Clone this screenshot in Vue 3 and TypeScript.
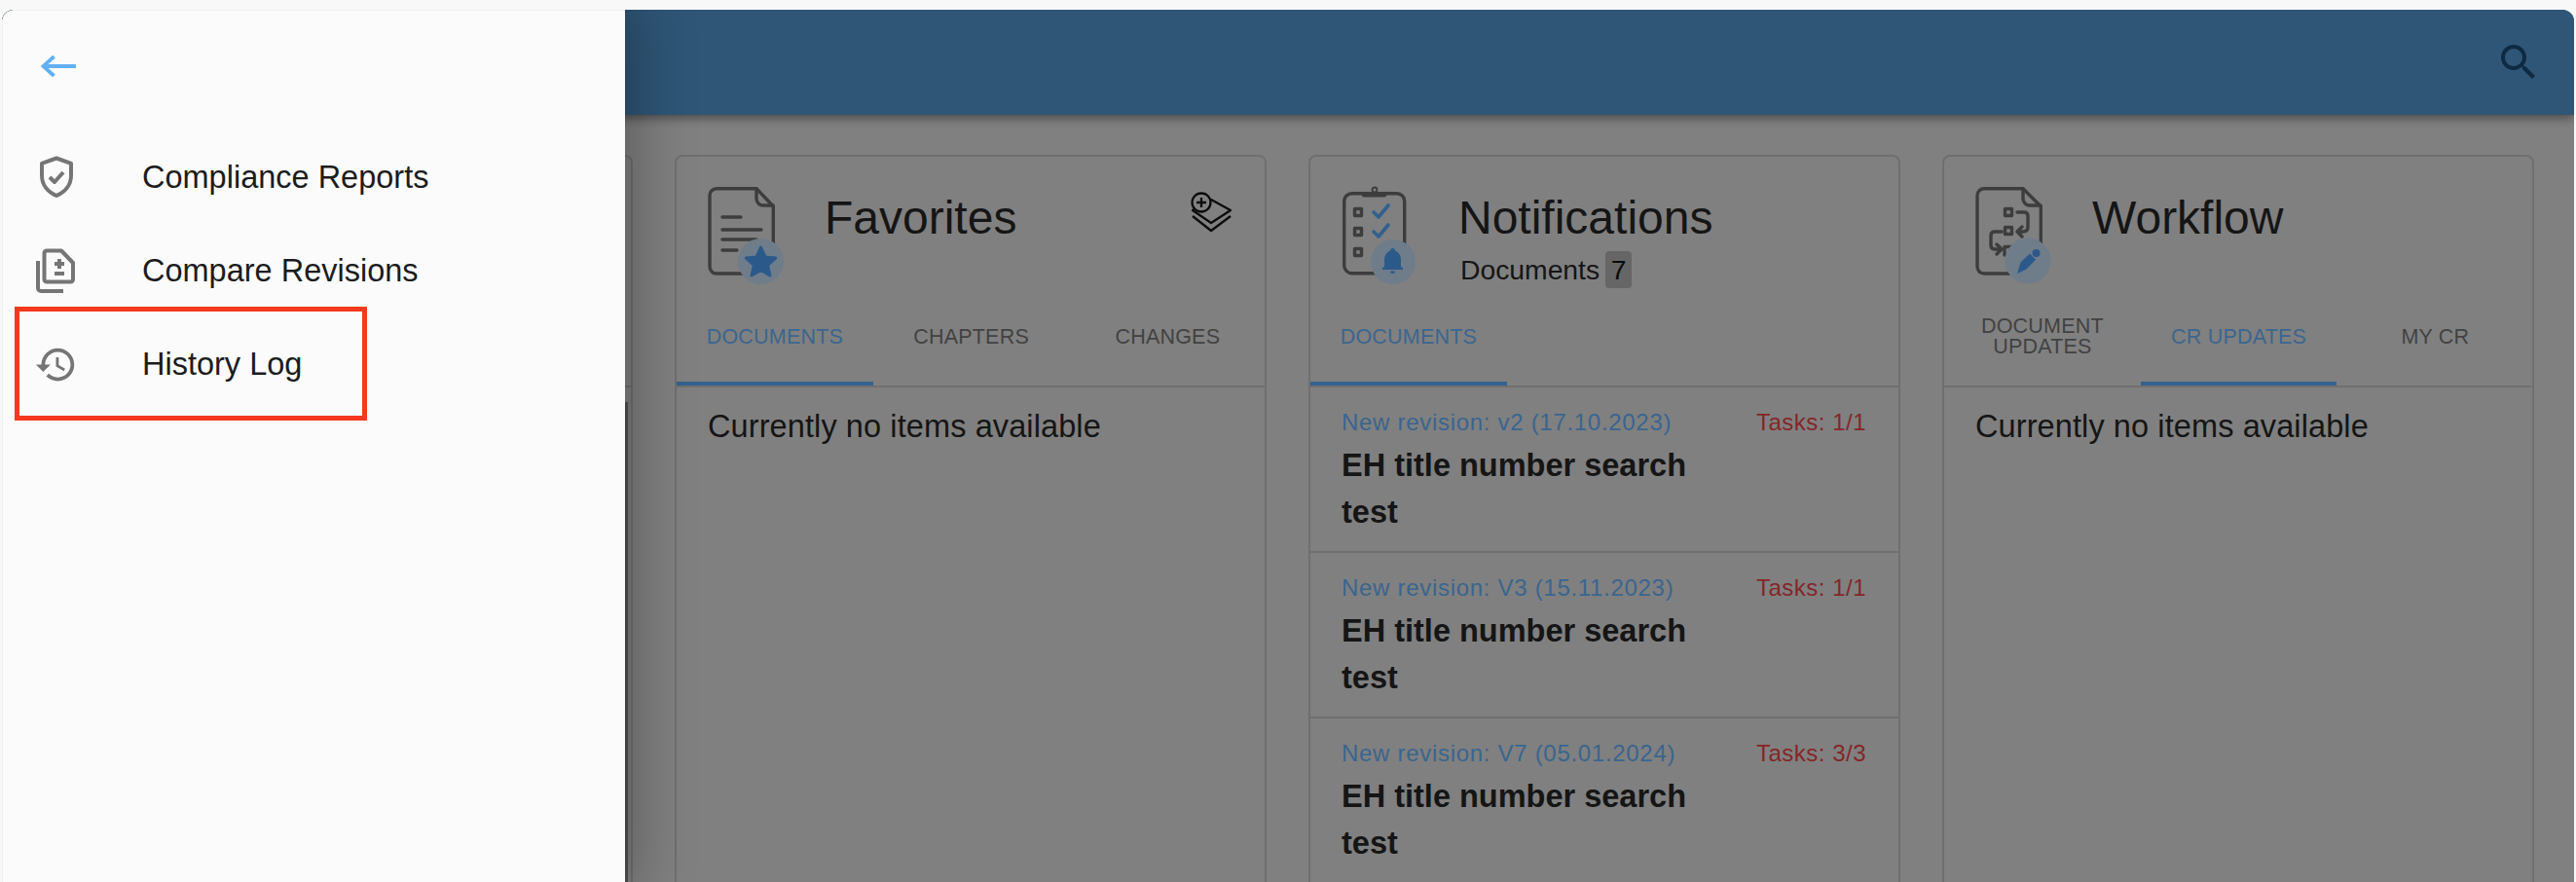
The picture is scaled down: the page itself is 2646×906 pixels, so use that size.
<script setup lang="ts">
const navItems = ['Compliance Reports', 'Compare Revisions', 'History Log']

const favoriteTabs = ['Documents', 'Chapters', 'Changes']
const workflowTabs = ['Document Updates', 'CR Updates', 'My CR']

const notifications = [
  { revision: 'New revision: v2 (17.10.2023)', tasks: 'Tasks: 1/1' },
  { revision: 'New revision: V3 (15.11.2023)', tasks: 'Tasks: 1/1' },
  { revision: 'New revision: V7 (05.01.2024)', tasks: 'Tasks: 3/3' },
]
</script>

<template>
  <div class="page">
    <div class="window">
      <header class="topbar">
        <svg class="search" viewBox="0 0 24 24">
          <path d="M15.5 14h-.79l-.28-.27C15.41 12.59 16 11.11 16 9.5 16 5.91 13.09 3 9.5 3S3 5.91 3 9.5 5.91 16 9.5 16c1.61 0 3.09-.59 4.23-1.57l.27.28v.79l5 4.99L20.49 19l-4.99-5zm-6 0C7.01 14 5 11.99 5 9.5S7.01 5 9.5 5 14 7.01 14 9.5 11.99 14 9.5 14z" />
        </svg>
      </header>

      <main class="board">
        <!-- first card sits behind the open drawer -->
        <section class="card">
          <div class="card-head"></div>
          <div class="tabs"></div>
          <div class="hidden-item"></div>
        </section>

        <section class="card">
          <div class="card-head">
            <svg class="card-icon" viewBox="0 0 84 104">
              <g class="line">
                <path d="M9 3.7H50L67.3 22V84a7 7 0 0 1-7 7H9a7 7 0 0 1-7-7V10.700a7 7 0 0 1 7-7z" />
                <path d="M50 3.700V14a7 7 0 0 0 7 7H67" />
                <path d="M15 33H34M15 46H55M15 56H50M15 67H30" />
              </g>
              <circle class="badge" cx="54.500" cy="78.500" r="23.500" />
              <polygon class="accent-fill" points="54.500,64 58.900,73.900 69.700,75.100 61.600,82.300 63.900,92.900 54.500,87.500 45.100,92.900 47.400,82.300 39.300,75.100 50.100,73.900" />
            </svg>
            <div class="titles">
              <h2>Favorites</h2>
            </div>
            <svg class="add-icon" viewBox="0 0 44 44">
              <path d="M2 26L21 41L41 26" />
              <path d="M21 9L41 20L21 33L2 20z" />
              <circle cx="11" cy="12" r="9.500" />
              <path d="M11 7V17M6 12H16" />
            </svg>
          </div>
          <div class="tabs">
            <div v-for="(tab, i) in favoriteTabs" :key="tab" class="tab" :class="{ active: i === 0 }">{{ tab }}</div>
          </div>
          <p class="empty">Currently no items available</p>
        </section>

        <section class="card">
          <div class="card-head">
            <svg class="card-icon" viewBox="0 0 84 104">
              <g class="line">
                <rect x="2.700" y="8.700" width="62" height="82" rx="8" />
                <circle cx="34" cy="5" r="2.500" stroke-width="1.800" />
                <rect x="13.500" y="24.500" width="7" height="7" />
                <rect x="13.500" y="44.500" width="7" height="7" />
                <rect x="13.500" y="65.500" width="7" height="7" />
              </g>
              <path class="dark-fill" d="M19 7H48L46 11a2 2 0 0 1-2 1.500H23a2 2 0 0 1-2-1.500z" />
              <path class="accent-line" d="M33 28L38 33L48 21M33 48L38 53L48 41" />
              <circle class="badge" cx="53" cy="79" r="23" />
              <path class="accent-fill no-stroke" d="M44 84.500V77c0-5 3-8.500 6-9.500a2.500 2.500 0 0 1 5 0c3 1 6 4.500 6 9.500v7.500zM42 84.500H63V87H42zM50 88.500H55A2.500 2.500 0 0 1 50 88.500z" />
            </svg>
            <div class="titles">
              <h2>Notifications</h2>
              <div class="count-row">
                <span>Documents</span>
                <span class="count">7</span>
              </div>
            </div>
          </div>
          <div class="tabs">
            <div class="tab active">Documents</div>
          </div>
          <div v-for="item in notifications" :key="item.revision" class="notification">
            <div class="notification-top">
              <span class="revision">{{ item.revision }}</span>
              <span class="tasks">{{ item.tasks }}</span>
            </div>
            <div class="doc-title">EH title number search test</div>
          </div>
        </section>

        <section class="card">
          <div class="card-head">
            <svg class="card-icon" viewBox="0 0 84 104">
              <g class="line">
                <path d="M9 3.7H49L67.3 22V84a7 7 0 0 1-7 7H9a7 7 0 0 1-7-7V10.700a7 7 0 0 1 7-7z" />
                <path d="M49 3.700V14a7 7 0 0 0 7 7H67" />
                <rect x="30.500" y="24.500" width="7" height="7" />
                <rect x="30.500" y="43.500" width="7" height="7" />
                <path d="M30 72V63.500H38" />
                <path d="M43 28H50Q54 28 54 32V43Q54 48 49 48H43M48 43L43 48L48 53" />
                <path d="M27 48H20Q16 48 16 52V62Q16 66 20 66H27M22 61L27 66L22 71" />
              </g>
              <circle class="badge" cx="54" cy="78" r="23.500" />
              <path class="accent-fill no-stroke" d="M43 91L46.500 79.500L56 70.500L62 76.800L52.500 86.500z" />
              <circle class="accent-fill no-stroke" cx="62.500" cy="70" r="4" />
            </svg>
            <div class="titles">
              <h2>Workflow</h2>
            </div>
          </div>
          <div class="tabs">
            <div v-for="(tab, i) in workflowTabs" :key="tab" class="tab" :class="{ active: i === 1 }">{{ tab }}</div>
          </div>
          <p class="empty">Currently no items available</p>
        </section>
      </main>

      <aside class="drawer">
        <div class="drawer-head">
          <svg class="back" viewBox="0 0 36 22">
            <path d="M36 11H3M13.500 1L2.500 11L13.500 21" />
          </svg>
        </div>
        <nav>
          <div v-for="(label, i) in navItems" :key="label" class="nav-item">
            <span class="nav-icon">
              <svg v-if="i === 0" class="stroke-icon" viewBox="0 0 45 46">
                <path d="M23 3.500L38 8.800V21.500C38 31.500 31 38.500 23 42C15 38.500 8 31.500 8 21.500V8.800z" />
                <path d="M16 23L21 28L30 18" />
              </svg>
              <svg v-else-if="i === 1" class="stroke-icon" viewBox="0 0 45 46">
                <path d="M13 2.500H28L40 15V32a2.500 2.500 0 0 1-2.500 2.500H13a2.500 2.500 0 0 1-2.500-2.500V5a2.500 2.500 0 0 1 2.500-2.500z" />
                <path d="M4 13V41a3 3 0 0 0 3 3H30" />
                <path d="M26 11V21M21 16H31M21 26H31" />
              </svg>
              <svg v-else class="fill-icon" viewBox="0 0 24 24">
                <path d="M13 3c-4.970 0-9 4.030-9 9H1l3.890 3.890.07.140L9 12H6c0-3.870 3.130-7 7-7s7 3.130 7 7-3.130 7-7 7c-1.930 0-3.680-.79-4.940-2.060l-1.420 1.420C8.270 19.990 10.510 21 13 21c4.970 0 9-4.030 9-9s-4.030-9-9-9zm-1 5v5l4.280 2.540.72-1.210-3.500-2.080V8H12z" />
              </svg>
            </span>
            <span class="nav-label">{{ label }}</span>
            <div v-if="i === 2" class="highlight"></div>
          </div>
        </nav>
      </aside>
    </div>
  </div>
</template>

<style>
html,
body {
  margin: 0;
  background: #f8f8f8;
}
</style>

<style scoped>
.page {
  width: 2646px;
  height: 906px;
  box-sizing: border-box;
  padding: 10px 2px 0;
  overflow: hidden;
  font-family: "Liberation Sans", Arial, sans-serif;
  color: #151515;
}

.window {
  position: relative;
  height: 896px;
  display: flex;
  flex-direction: column;
  overflow: hidden;
  border-radius: 12px 12px 0 0;
  background: #808080;
}

.topbar {
  position: relative;
  z-index: 1;
  flex: 0 0 108px;
  display: flex;
  align-items: center;
  justify-content: flex-end;
  padding-right: 33px;
  background: #2f5677;
  box-shadow: 0 3px 10px rgba(0, 0, 0, 0.45);
}

.search {
  width: 48px;
  height: 48px;
  fill: #0e2a42;
}

.board {
  flex: 1;
  display: grid;
  grid-template-columns: repeat(4, minmax(0, 1fr));
  gap: 43px;
  padding: 41px 41px 0 40px;
  overflow: hidden;
}

.card {
  box-sizing: border-box;
  height: 800px;
  border: 2px solid #6f6f6f;
  border-radius: 8px;
}

.card-head {
  box-sizing: border-box;
  height: 135px;
  display: flex;
  gap: 36px;
  padding: 29px 32px 0;
}

.card-icon {
  flex: 0 0 84px;
  width: 84px;
  height: 104px;
}

.line {
  fill: none;
  stroke: #3d3d3d;
  stroke-width: 3.4;
  stroke-linecap: round;
  stroke-linejoin: round;
}

.dark-fill {
  fill: #3d3d3d;
}

.badge {
  fill: #6f7c8a;
}

.accent-fill {
  fill: #2b5a8a;
  stroke: #2b5a8a;
  stroke-width: 3;
  stroke-linejoin: round;
}

.accent-fill.no-stroke {
  stroke: none;
}

.accent-line {
  fill: none;
  stroke: #32608e;
  stroke-width: 3.6;
  stroke-linecap: round;
  stroke-linejoin: round;
}

.titles {
  margin-top: 7px;
}

h2 {
  margin: 0;
  font-size: 48px;
  font-weight: 400;
  line-height: 54px;
  color: #151515;
}

.count-row {
  display: flex;
  align-items: center;
  gap: 6px;
  margin-top: 7px;
  margin-left: 2px;
  font-size: 28.300px;
  line-height: 38px;
}

.count {
  width: 27px;
  height: 38px;
  border-radius: 4px;
  text-align: center;
  background: #666666;
  color: #0a0a0a;
}

.add-icon {
  flex: 0 0 44px;
  width: 44px;
  height: 44px;
  margin-top: 6px;
  margin-left: auto;
  fill: none;
  stroke: #0c0c0c;
  stroke-width: 2.300;
  stroke-linejoin: round;
}

.add-icon circle {
  fill: #808080;
}

.tabs {
  display: flex;
  height: 100px;
  border-bottom: 2px solid #6f6f6f;
}

.tab {
  box-sizing: border-box;
  flex: 0 0 33.400%;
  display: flex;
  align-items: center;
  justify-content: center;
  padding: 0 20px;
  font-size: 21.500px;
  letter-spacing: 0.2px;
  line-height: 21px;
  text-align: center;
  text-transform: uppercase;
  color: #424242;
}

.tab.active {
  color: #3b668f;
  box-shadow: inset 0 -4px 0 #336290;
}

.empty {
  margin: 0;
  padding: 21px 32px;
  font-size: 32.500px;
  letter-spacing: 0.1px;
  line-height: 38px;
}

.hidden-item {
  height: 800px;
  margin-top: 15px;
  margin-right: 3px;
  border-right: 3px solid #505050;
}

.notification {
  box-sizing: border-box;
  height: 170px;
  padding: 20px 33px 0 32px;
  border-bottom: 2px solid #6f6f6f;
}

.notification-top {
  display: flex;
  justify-content: space-between;
  font-size: 24px;
  line-height: 32px;
}

.revision {
  letter-spacing: 0.7px;
  color: #3a658f;
}

.tasks {
  letter-spacing: 0.5px;
  color: #842627;
}

.doc-title {
  width: 400px;
  margin-top: 4px;
  font-size: 32.500px;
  font-weight: 700;
  line-height: 48px;
}

.drawer {
  position: absolute;
  top: 0;
  left: 0;
  bottom: 0;
  z-index: 2;
  box-sizing: border-box;
  width: 640px;
  background: #fbfbfb;
  border-top: 1px solid #eeeeee;
  border-left: 1px solid #eeeeee;
  border-radius: 12px 0 0 0;
  box-shadow: 0 0 60px 12px rgba(0, 0, 0, 0.28);
  color: #1c1c1c;
}

.drawer-head {
  height: 123px;
  display: flex;
  align-items: center;
  padding-left: 39px;
  padding-bottom: 9px;
  box-sizing: border-box;
}

.back {
  width: 36px;
  height: 22px;
  fill: none;
  stroke: #62b0f4;
  stroke-width: 3.800;
}

.nav-item {
  position: relative;
  display: flex;
  align-items: center;
  height: 96px;
  padding-left: 32px;
}

.nav-icon {
  flex: 0 0 45px;
  height: 46px;
  display: flex;
  align-items: center;
  justify-content: center;
  margin-right: 66px;
}

.stroke-icon {
  width: 45px;
  height: 46px;
  fill: none;
  stroke: #757575;
  stroke-width: 4;
  stroke-linejoin: round;
}

.fill-icon {
  width: 45px;
  height: 45px;
  fill: #757575;
}

.nav-label {
  font-size: 32.500px;
  line-height: 40px;
}

/* annotation frame around the last entry */
.highlight {
  position: absolute;
  top: -11px;
  left: 12px;
  bottom: -10px;
  width: 362px;
  box-sizing: border-box;
  border: 5px solid #f4391f;
}
</style>
